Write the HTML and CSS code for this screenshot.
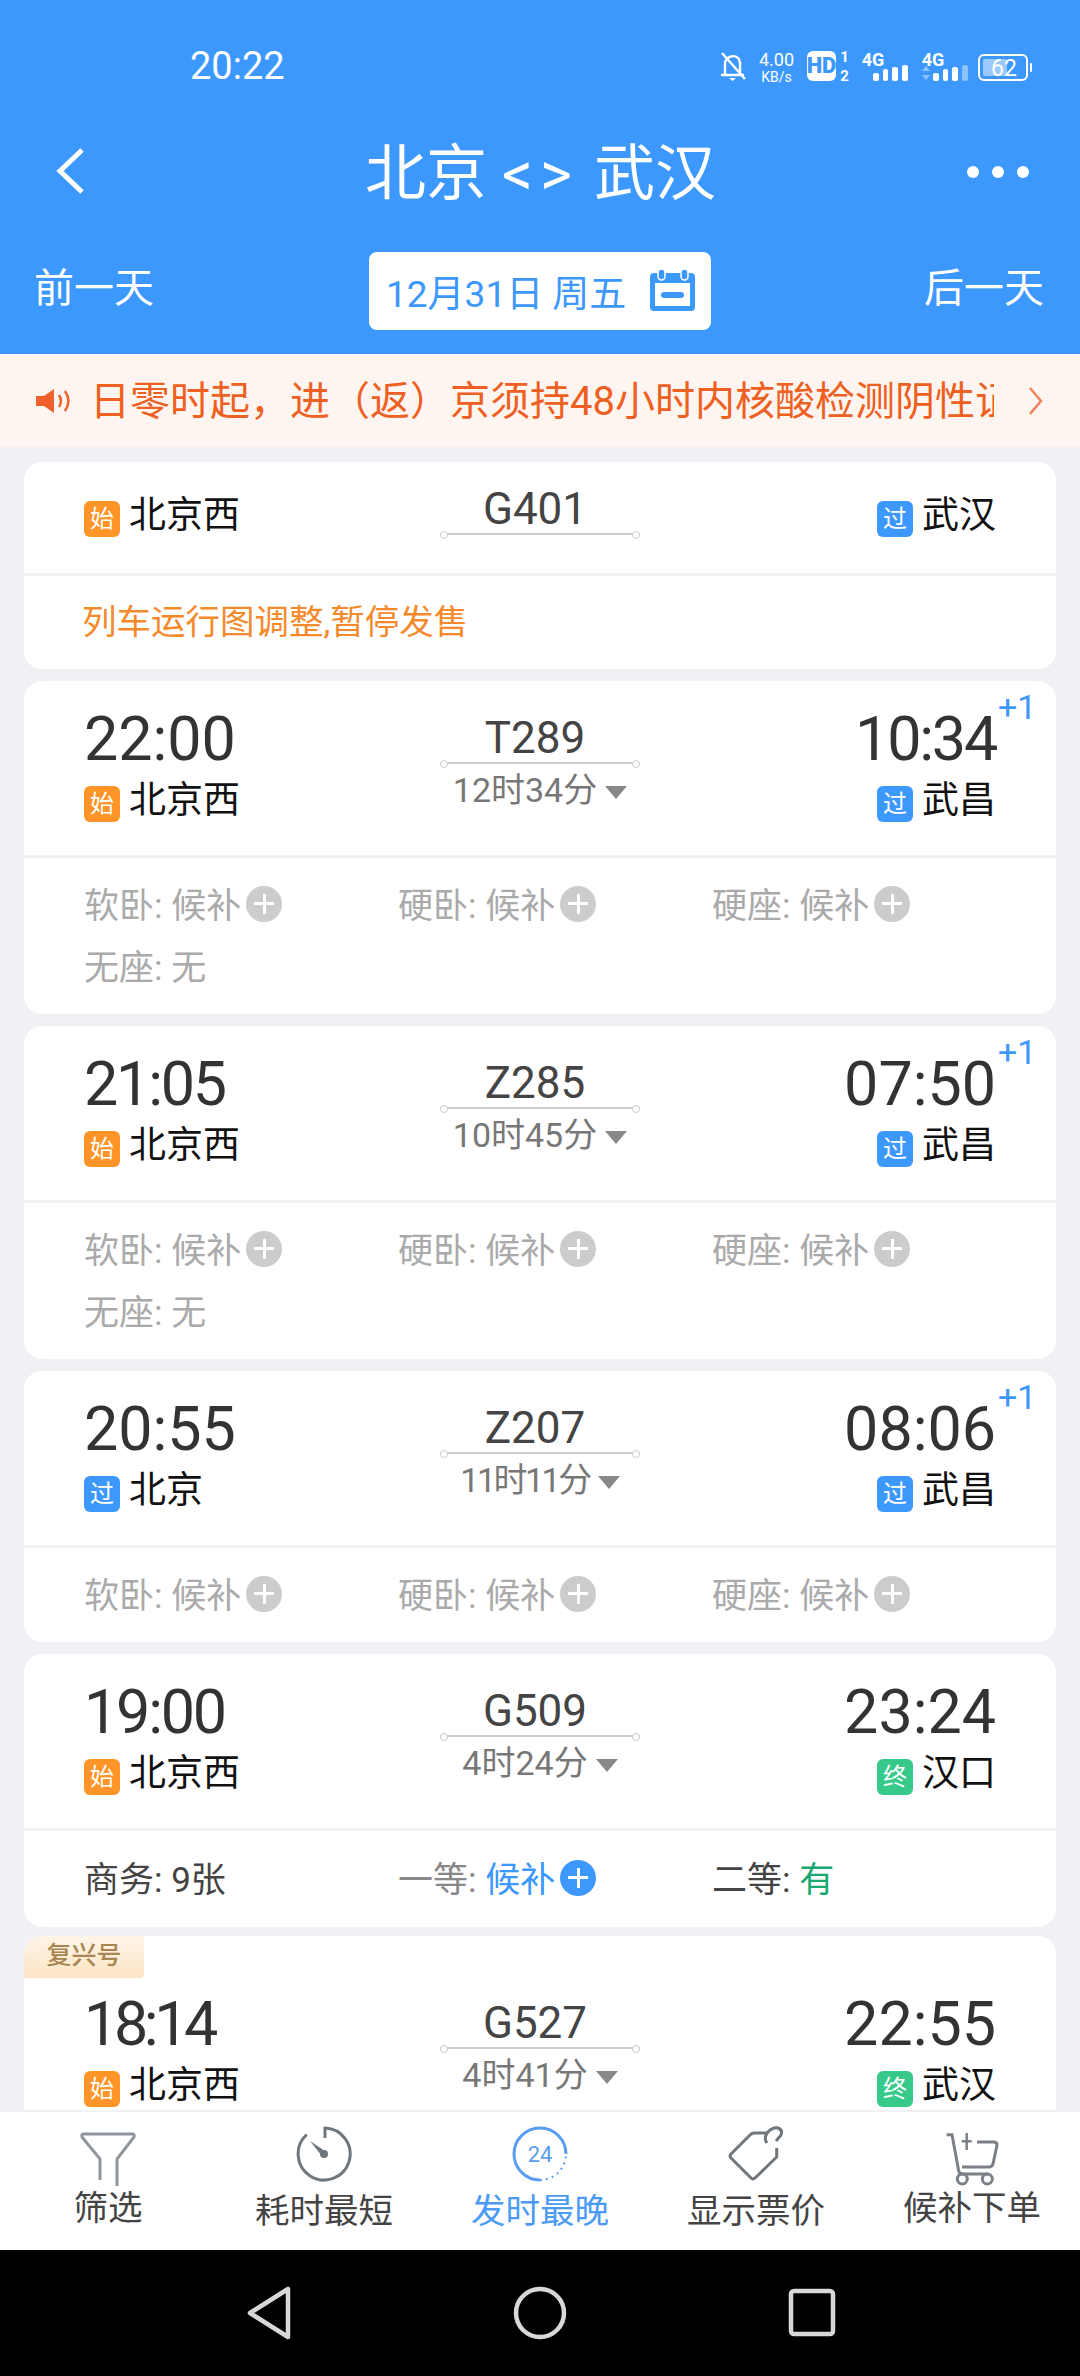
FILE: index.html
```html
<!DOCTYPE html>
<html>

<head>
    <meta charset="utf-8" />
    <title>北京 &lt;&gt; 武汉</title>
    <link rel="stylesheet" href="styles.css">
</head>

<body>
    <div class="page">
        <div class="header">
            <div class="status">
                <span class="clock">20:22</span>
                <svg class="status-icons" width="320" height="40" viewBox="715 45 320 40">
                    <!-- 静音铃铛 -->
                    <path d="M725 75 V65 a8 8 0 0 1 14 -6 l1 4 V75 Z M721 75 H744" fill="none" stroke="#fff" stroke-width="2.4" stroke-linejoin="round"/>
                    <path d="M722 53 L745 79" stroke="#fff" stroke-width="2.4"/>
                    <path d="M729 78 h7 l-3.500 3 Z" fill="#fff"/>
                    <text class="si si-num" x="776.500" y="65.500">4.00</text>
                    <text class="si si-unit" x="776.500" y="82">KB/s</text>
                    <rect x="807" y="51" width="29" height="30" rx="6" fill="#fff"/>
                    <text class="si si-hd" x="821.500" y="73" fill="#3d98fd">HD</text>
                    <text class="si si-sim" x="844.500" y="62">1</text>
                    <text class="si si-sim" x="844.500" y="81">2</text>
                    <text class="si si-g" x="873" y="66">4G</text>
                    <rect x="873" y="73" width="6" height="8" rx="2" fill="#fff"/>
                    <rect x="883" y="69" width="5" height="12" rx="2" fill="#fff"/>
                    <rect x="892" y="67" width="6" height="14" rx="2" fill="#fff"/>
                    <rect x="902" y="65" width="6" height="16" rx="2" fill="#fff"/>
                    <text class="si si-g" x="933" y="66">4G</text>
                    <path d="M926 66 l4 5 h-8 Z M926 80 l4 -5 h-8 Z" fill="#8cc2fd"/>
                    <rect x="933" y="73" width="6" height="8" rx="2" fill="#fff"/>
                    <rect x="943" y="69" width="5" height="12" rx="2" fill="#fff"/>
                    <rect x="952" y="67" width="6" height="14" rx="2" fill="#fff"/>
                    <rect x="962" y="65" width="6" height="16" rx="2" fill="#8cc2fd"/>
                    <rect x="979" y="55" width="48" height="25" rx="5" fill="none" stroke="#fff" stroke-width="2"/>
                    <rect x="983" y="59" width="24" height="17" rx="2" fill="#9cc9fe"/>
                    <rect x="1030" y="63" width="2" height="9" rx="1" fill="#fff"/>
                    <text class="si si-bat" x="1004" y="76">62</text>
                </svg>
            </div>
            <div class="nav">
                <svg class="nav-back" width="36" height="50" viewBox="0 0 36 50">
                    <path d="M30 3 L8 24 L30 45" fill="none" stroke="#fff" stroke-width="5"/>
                </svg>
                <div class="title">北京 <span class="arrows">&lt;&gt;</span> 武汉</div>
                <div class="dots"><i></i><i></i><i></i></div>
            </div>
            <div class="dates">
                <span class="day">前一天</span>
                <div class="date-box">
                    <span>12月31日 周五</span>
                    <svg width="46" height="44" viewBox="0 0 46 44">
                        <rect x="0" y="4" width="45" height="38" rx="4" fill="#3d98fd"/>
                        <rect x="5" y="14" width="35" height="23" fill="#fff"/>
                        <rect x="8" y="0" width="7" height="11" rx="3.500" fill="#3d98fd" stroke="#fff" stroke-width="1.500"/>
                        <rect x="31" y="0" width="7" height="11" rx="3.500" fill="#3d98fd" stroke="#fff" stroke-width="1.500"/>
                        <rect x="11" y="23" width="23" height="6" rx="3" fill="#3d98fd"/>
                    </svg>
                </div>
                <span class="day">后一天</span>
            </div>
        </div>

        <div class="notice">
            <svg width="38" height="26" viewBox="0 0 38 26">
                <path d="M0 8 H8 L18 1 V25 L8 18 H0 Z" fill="#f0602a"/>
                <path d="M23 7 q4 6 0 12 M29 3 q7 10 0 20" fill="none" stroke="#f0602a" stroke-width="2.500"/>
            </svg>
            <div class="notice-text"><span>日零时起，进（返）京须持48小时内核酸检测阴性证明</span></div>
            <svg width="16" height="32" viewBox="0 0 16 32">
                <path d="M2 3 L13 16 L2 29" fill="none" stroke="#f0825a" stroke-width="2.500"/>
            </svg>
        </div>

        <div class="list">
            <div class="card">
                <div class="head head-plain">
                    <div class="side">
                        <div class="st"><b class="tag orange">始</b>北京西</div>
                    </div>
                    <div class="mid">
                        <div class="code">G401</div>
                        <div class="line"></div>
                    </div>
                    <div class="side right">
                        <div class="st"><b class="tag blue">过</b>武汉</div>
                    </div>
                </div>
                <div class="stop-sale">列车运行图调整,暂停发售</div>
            </div>

            <div class="card">
                <div class="head">
                    <div class="side">
                        <div class="time">22:00</div>
                        <div class="st"><b class="tag orange">始</b>北京西</div>
                    </div>
                    <div class="mid">
                        <div class="code">T289</div>
                        <div class="line"></div>
                        <div class="dur">12时34分<i class="tri"></i></div>
                    </div>
                    <div class="side right">
                        <div class="time t1">10:34<span class="plus-day">+1</span></div>
                        <div class="st"><b class="tag blue">过</b>武昌</div>
                    </div>
                </div>
                <div class="seats">
                    <div class="seat">软卧: 候补<i class="add"></i></div>
                    <div class="seat">硬卧: 候补<i class="add"></i></div>
                    <div class="seat">硬座: 候补<i class="add"></i></div>
                    <div class="seat">无座: 无</div>
                </div>
            </div>

            <div class="card">
                <div class="head">
                    <div class="side">
                        <div class="time t1">21:05</div>
                        <div class="st"><b class="tag orange">始</b>北京西</div>
                    </div>
                    <div class="mid">
                        <div class="code">Z285</div>
                        <div class="line"></div>
                        <div class="dur">10时45分<i class="tri"></i></div>
                    </div>
                    <div class="side right">
                        <div class="time">07:50<span class="plus-day">+1</span></div>
                        <div class="st"><b class="tag blue">过</b>武昌</div>
                    </div>
                </div>
                <div class="seats">
                    <div class="seat">软卧: 候补<i class="add"></i></div>
                    <div class="seat">硬卧: 候补<i class="add"></i></div>
                    <div class="seat">硬座: 候补<i class="add"></i></div>
                    <div class="seat">无座: 无</div>
                </div>
            </div>

            <div class="card">
                <div class="head">
                    <div class="side">
                        <div class="time">20:55</div>
                        <div class="st"><b class="tag blue">过</b>北京</div>
                    </div>
                    <div class="mid">
                        <div class="code">Z207</div>
                        <div class="line"></div>
                        <div class="dur dur-ones">11时11分<i class="tri"></i></div>
                    </div>
                    <div class="side right">
                        <div class="time">08:06<span class="plus-day">+1</span></div>
                        <div class="st"><b class="tag blue">过</b>武昌</div>
                    </div>
                </div>
                <div class="seats">
                    <div class="seat">软卧: 候补<i class="add"></i></div>
                    <div class="seat">硬卧: 候补<i class="add"></i></div>
                    <div class="seat">硬座: 候补<i class="add"></i></div>
                </div>
            </div>

            <div class="card">
                <div class="head">
                    <div class="side">
                        <div class="time t1">19:00</div>
                        <div class="st"><b class="tag orange">始</b>北京西</div>
                    </div>
                    <div class="mid">
                        <div class="code">G509</div>
                        <div class="line"></div>
                        <div class="dur">4时24分<i class="tri"></i></div>
                    </div>
                    <div class="side right">
                        <div class="time">23:24</div>
                        <div class="st"><b class="tag green">终</b>汉口</div>
                    </div>
                </div>
                <div class="seats seats-on">
                    <div class="seat dark">商务: 9张</div>
                    <div class="seat"><span>一等:&nbsp;</span><span class="c-blue">候补</span><i class="add add-on"></i></div>
                    <div class="seat dark">二等:&nbsp;<span class="c-green">有</span></div>
                </div>
            </div>

            <div class="card card-fx">
                <div class="fx">复兴号</div>
                <div class="head head-fx">
                    <div class="side">
                        <div class="time t2">18:14</div>
                        <div class="st"><b class="tag orange">始</b>北京西</div>
                    </div>
                    <div class="mid">
                        <div class="code">G527</div>
                        <div class="line"></div>
                        <div class="dur">4时41分<i class="tri"></i></div>
                    </div>
                    <div class="side right">
                        <div class="time">22:55</div>
                        <div class="st"><b class="tag green">终</b>武汉</div>
                    </div>
                </div>
            </div>
        </div>

        <div class="tabs">
            <div class="tab">
                <svg width="60" height="60" viewBox="0 0 60 60">
                    <path d="M22 54 V33 L4 11 Q3 8 6 8 H54 Q57 8 56 11 L39 33 V60" fill="none" stroke="#8f959a" stroke-width="3"/>
                </svg>
                <span class="tab-text tab-up">筛选</span>
            </div>
            <div class="tab">
                <svg width="60" height="60" viewBox="0 0 60 60">
                    <path d="M31 12 V2 A26 26 0 1 1 12.700 8.700" fill="none" stroke="#6f767c" stroke-width="3"/>
                    <path d="M16 15 L32 25.800 L28 30.200 Z" fill="#6f767c"/>
                    <circle cx="30" cy="28" r="4" fill="#6f767c"/>
                </svg>
                <span class="tab-text">耗时最短</span>
            </div>
            <div class="tab on">
                <svg width="60" height="60" viewBox="0 0 60 60">
                    <path d="M56 28 A26 26 0 1 0 30 54" fill="none" stroke="#5b9df0" stroke-width="3"/>
                    <path d="M30 54 A26 26 0 0 0 56 28" fill="none" stroke="#5b9df0" stroke-width="2" stroke-dasharray="2 4"/>
                    <text class="si-24" x="30" y="36">24</text>
                </svg>
                <span class="tab-text">发时最晚</span>
            </div>
            <div class="tab">
                <svg width="60" height="60" viewBox="0 0 60 60">
                    <path d="M50.700 22 V31 L29 52 Q27 54 25 52 L5 32 Q3 30 5 28 L24 9 Q26 7 28 7 H42" fill="none" stroke="#6f767c" stroke-width="3" stroke-linejoin="round"/>
                    <path d="M41 17 Q37 12 42 6 Q47 1 52 2 Q57 4 55 9 L50 15" fill="none" stroke="#6f767c" stroke-width="3"/>
                </svg>
                <span class="tab-text">显示票价</span>
            </div>
            <div class="tab">
                <svg width="60" height="60" viewBox="0 0 60 60">
                    <path d="M4.700 8.700 H10 L16.500 44 Q17 48 21 48 H46" fill="none" stroke="#7a8086" stroke-width="3"/>
                    <path d="M20 41 H47 Q50 41 51 38 L55 19 Q55 16 52 16 H35" fill="none" stroke="#7a8086" stroke-width="3"/>
                    <path d="M24.700 7 V24 M19.700 15.300 H29.700" stroke="#7a8086" stroke-width="2.500"/>
                    <circle cx="20.300" cy="53" r="5" fill="none" stroke="#7a8086" stroke-width="3"/>
                    <circle cx="45.300" cy="53" r="5" fill="none" stroke="#7a8086" stroke-width="3"/>
                </svg>
                <span class="tab-text tab-up">候补下单</span>
            </div>
        </div>

        <div class="sysbar">
            <svg width="56" height="60" viewBox="0 0 56 60">
                <path d="M48 6 V54 L10 30 Z" fill="none" stroke="#d8d8d8" stroke-width="4.500" stroke-linejoin="round"/>
            </svg>
            <svg width="56" height="60" viewBox="0 0 56 60">
                <circle cx="28" cy="30" r="24" fill="none" stroke="#d8d8d8" stroke-width="4.500"/>
            </svg>
            <svg width="56" height="60" viewBox="0 0 56 60">
                <rect x="7" y="8" width="42" height="43" rx="3" fill="none" stroke="#d8d8d8" stroke-width="4.500"/>
            </svg>
        </div>
    </div>
</body>

</html>
```

FILE: styles.css
```css
* {
    margin: 0;
    padding: 0;
    box-sizing: border-box;
}

body {
    font-family: Roboto, "Noto Sans CJK SC", sans-serif;
    background: #f0f0f5;
}

i,
b {
    font-style: normal;
    font-weight: normal;
}

.page {
    width: 1080px;
    height: 2376px;
    display: flex;
    flex-direction: column;
    overflow: hidden;
}

/* 顶部蓝色区域 */
.header {
    height: 354px;
    background: #3d98fd;
    color: #fff;
}

.status {
    height: 132px;
    display: flex;
    justify-content: space-between;
    align-items: flex-start;
    padding: 45px 45px 0 190px;
}

.clock {
    font-size: 38px;
    line-height: 42px;
}

.si {
    fill: #fff;
    text-anchor: middle;
}

.si-hd {
    fill: #3d98fd;
    font-size: 22px;
    font-weight: 900;
}

.si-num {
    font-size: 18px;
}

.si-unit {
    font-size: 14px;
}

.si-sim {
    font-size: 15px;
    font-weight: 700;
}

.si-g {
    font-size: 18px;
    font-weight: 700;
    text-anchor: middle;
}

.si-bat {
    font-size: 23px;
}

.si-24 {
    fill: #5b9df0;
    font-size: 22px;
    text-anchor: middle;
}

.nav {
    height: 84px;
    display: flex;
    align-items: center;
    justify-content: space-between;
    padding: 0 51px 0 52px;
}

.nav-back {
    margin-top: -4px;
}

.title {
    font-size: 61px;
    line-height: 70px;
    margin-left: 26px;
}

.arrows {
    letter-spacing: 7px;
}

.dots {
    display: flex;
    gap: 13px;
    margin-top: -4px;
}

.dots i {
    width: 12px;
    height: 12px;
    background: #fff;
    border-radius: 50%;
}

.dates {
    height: 78px;
    margin-top: 36px;
    display: flex;
    align-items: center;
    justify-content: space-between;
    padding: 0 34px;
}

.day {
    font-size: 40px;
    width: 122px;
    margin-top: -12px;
}

.date-box {
    width: 342px;
    height: 78px;
    background: #fff;
    border-radius: 8px;
    color: #3d98fd;
    font-size: 37px;
    display: flex;
    align-items: center;
    justify-content: space-between;
    padding: 0 15px 0 17px;
}

/* 通知条 */
.notice {
    height: 93px;
    background: #fff5f0;
    color: #ee5f22;
    display: flex;
    align-items: center;
    padding: 0 36px;
}

.notice-text {
    width: 906px;
    margin: -6px 34px 0 16px;
    font-size: 40px;
    white-space: nowrap;
    overflow: hidden;
}

/* 车次列表 */
.list {
    flex: 1;
    min-height: 0;
    overflow: hidden;
    padding: 15px 24px 0;
    display: flex;
    flex-direction: column;
    gap: 12px;
}

.card {
    flex: none;
    position: relative;
    background: #fff;
    border-radius: 18px;
    overflow: hidden;
}

.head {
    height: 174px;
    padding: 28px 60px 0;
    display: grid;
    grid-template-columns: 1fr 200px 1fr;
}

.head-plain {
    height: 111px;
    padding-top: 23px;
}

.head-plain .side {
    padding-top: 13px;
}

.head-plain .mid {
    padding-top: 0;
}

.head-fx {
    padding-top: 58px;
    height: 174px;
}

.side {
    display: flex;
    flex-direction: column;
    align-items: flex-start;
}

.right {
    align-items: flex-end;
}

.time {
    position: relative;
    font-size: 61px;
    line-height: 60px;
    color: #333;
    margin-bottom: 14px;
}

/* 1 比别的数字窄,带 1 的时间收紧字距 */
.t1 {
    letter-spacing: -2.2px;
}

.t2 {
    letter-spacing: -4.4px;
}

.plus-day {
    position: absolute;
    left: 100%;
    top: -22px;
    margin-left: 2px;
    color: #3d98fd;
    font-size: 34px;
    line-height: 40px;
    letter-spacing: 0;
}

.st {
    display: flex;
    font-size: 37px;
    line-height: 36px;
    color: #111;
}

.tag {
    width: 36px;
    height: 36px;
    margin-right: 9px;
    margin-top: 3px;
    margin-bottom: -3px;
    border-radius: 6px;
    color: #fff;
    font-size: 24px;
    line-height: 36px;
    text-align: center;
}

.orange {
    background: #ff9428;
}

.blue {
    background: #3d98fd;
}

.green {
    background: #36c98a;
}

.mid {
    padding-top: 5px;
    display: flex;
    flex-direction: column;
    align-items: center;
}

.code {
    font-size: 44px;
    line-height: 48px;
    color: #444;
    margin-right: 10px;
}

.line {
    position: relative;
    width: 200px;
    height: 2px;
    background: #ccc;
}

.line::before,
.line::after {
    content: "";
    position: absolute;
    top: -2px;
    width: 6px;
    height: 6px;
    background: #fff;
    border: 1px solid #ccc;
    border-radius: 50%;
}

.line::before {
    left: 0;
}

.line::after {
    right: 0;
}

.dur {
    display: flex;
    align-items: center;
    font-size: 34px;
    line-height: 44px;
    margin-top: 4px;
    color: #777;
}

.dur-ones {
    letter-spacing: -2.5px;
}

.tri {
    width: 0;
    height: 0;
    margin: 4px 0 0 8px;
    border-left: 11px solid transparent;
    border-right: 11px solid transparent;
    border-top: 13px solid #888;
}

.stop-sale {
    height: 96px;
    border-top: 3px solid #f2f2f5;
    padding-left: 58px;
    font-size: 34.5px;
    line-height: 93px;
    color: #f58a2c;
}

.seats {
    border-top: 3px solid #f2f2f5;
    padding: 13px 0 19px 60px;
    display: grid;
    grid-template-columns: repeat(3, 314px);
    grid-auto-rows: 62px;
    font-size: 35px;
    color: #aaa;
}

.seats-on {
    padding: 14px 0 20px 60px;
}

.seat {
    display: flex;
    align-items: center;
    white-space: pre;
}

.dark {
    color: #444;
}

.seats-on .seat:nth-child(2) {
    color: #888;
}

.c-blue.c-blue {
    color: #3d98fd;
}

.c-green {
    color: #1aa870;
}

.add {
    width: 36px;
    height: 36px;
    margin-left: 5px;
    margin-top: 3px;
    border-radius: 50%;
    background:
        linear-gradient(#fff, #fff) center / 20px 3px no-repeat,
        linear-gradient(#fff, #fff) center / 3px 20px no-repeat,
        #ccc;
}

.add-on {
    background:
        linear-gradient(#fff, #fff) center / 20px 3px no-repeat,
        linear-gradient(#fff, #fff) center / 3px 20px no-repeat,
        #3d98fd;
}

.card-fx {
    margin-top: -3px;
    border-radius: 18px 18px 0 0;
}

.fx {
    position: absolute;
    left: 0;
    top: 0;
    width: 120px;
    height: 42px;
    border-radius: 0 0 4px 0;
    background: linear-gradient(#fdf4e7, #fde6c4);
    color: #a98552;
    font-size: 25px;
    font-weight: 500;
    line-height: 40px;
    text-align: center;
}

/* 底部工具栏 */
.tabs {
    height: 138px;
    background: #fff;
    display: grid;
    grid-template-columns: repeat(5, 216px);
}

.tab {
    display: flex;
    flex-direction: column;
    align-items: center;
    padding-top: 14px;
    color: #444;
}

.tab-text {
    font-size: 34.5px;
    line-height: 44px;
    margin-top: 3px;
}

.tab-up {
    margin-top: 0;
}

.on {
    color: #4b9bf5;
}

.sysbar {
    height: 126px;
    background: #000;
    display: flex;
    justify-content: center;
    align-items: center;
    gap: 216px;
}
```
